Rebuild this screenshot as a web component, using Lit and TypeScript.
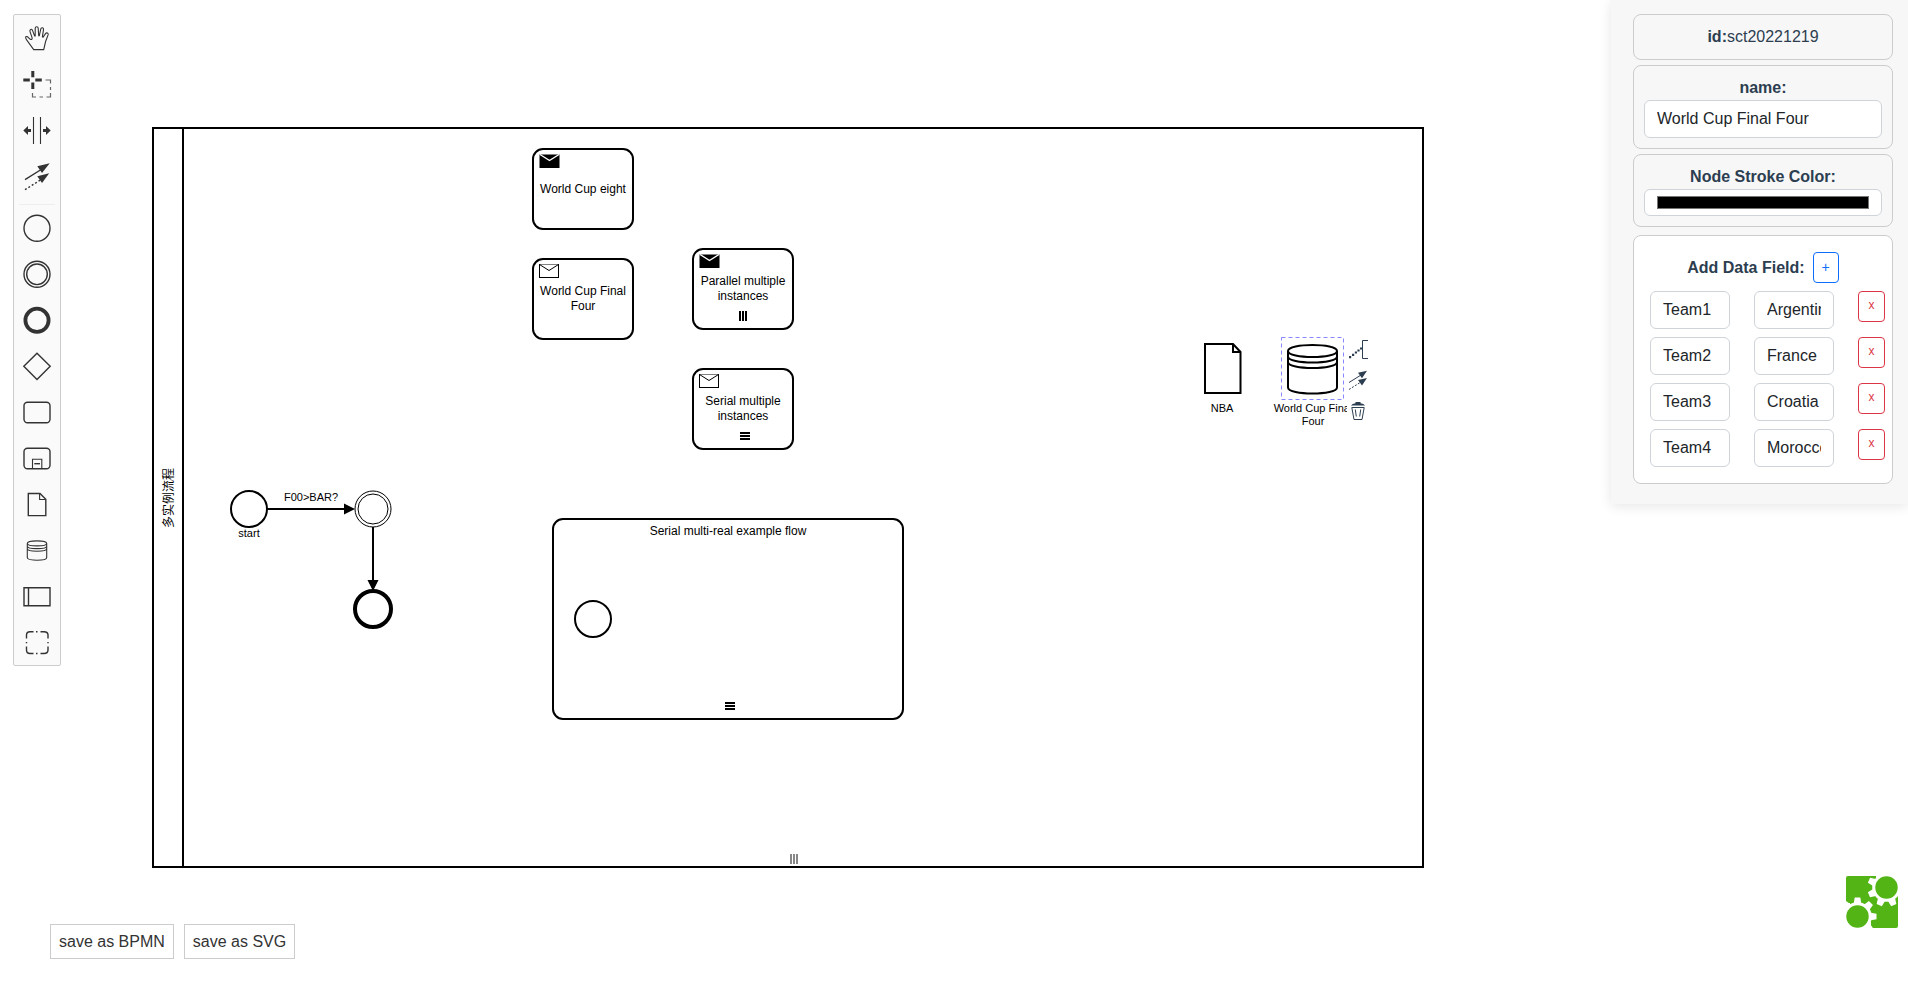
import { LitElement, html, svg, css, type SVGTemplateResult } from "lit";
import { customElement, property, state } from "lit/decorators.js";

interface Field {
  key: string;
  value: string;
}

interface Tool {
  title: string;
  icon: SVGTemplateResult;
}

const flowTools: Tool[] = [
  {
    title: "Activate the hand tool",
    icon: svg`<path class="thin" d="M11.7 26.6 L4.8 17.2 C2.8 14.6 3.6 13 5 13.6 C6.4 14.2 7.4 16 8.7 16.5 C10 16.8 10.4 15.6 10 14.3 L8 8.6 C7.4 6.3 9.6 5.4 10.5 7.4 L12.6 12.9 H13.2 V5.3 C13.3 3.3 16.1 3.3 16.2 5.3 L16.7 12.8 H17.3 L18.8 6 C19.3 4 21.8 4.6 21.5 6.6 L20.4 13.8 L21 14.2 L23.5 10.6 C24.6 9.2 26.7 10 26.1 11.9 L23.6 18.5 L21.7 26.6 Z"/>`,
  },
  {
    title: "Activate the lasso tool",
    icon: svg`<path class="fill" d="M9.3 2h3v6.3H9.3z M9.3 13.5h3V20H9.3z M1.3 9.5h6.5v3H1.3z M13.3 9.5h6.5v3h-6.5z"/>
      <path class="dim" d="M23.5 11H28.5V14.5 M28.5 18V21 M28.5 24V28H24.5 M21 28H17.5 M14 28H10.5V24"/>`,
  },
  {
    title: "Activate the create/remove space tool",
    icon: svg`<path class="thin" d="M11.5 2V29 M18.5 2V29"/>
      <path class="fill" d="M1.3 15.5 L6 11 V14 H9 V17 H6 V20 Z M28.7 15.5 L24 11 V14 H21 V17 H24 V20 Z"/>`,
  },
  {
    title: "Activate the global connect tool",
    icon: svg`<path class="line" d="M3 18.7 L20 8"/><path class="fill" d="M27.7 2.3 L15.3 5.2 L20 12 Z"/>
      <path class="line" stroke-dasharray="2 2" d="M3 28.7 L20 18"/><path class="fill" d="M27.2 12.3 L15.3 15.2 L20 22 Z"/>`,
  },
];

const shapeTools: Tool[] = [
  { title: "Create StartEvent", icon: svg`<circle class="line" cx="15" cy="15.3" r="13"/>` },
  {
    title: "Create Intermediate/Boundary Event",
    icon: svg`<circle class="line" cx="15" cy="15.3" r="13"/><circle class="line" cx="15" cy="15.3" r="10.3"/>`,
  },
  { title: "Create EndEvent", icon: svg`<circle class="heavy" cx="15" cy="15.3" r="11.6"/>` },
  { title: "Create Gateway", icon: svg`<path class="line" d="M15 2.2 L28.2 15.3 L15 28.4 L1.8 15.3 Z"/>` },
  { title: "Create Task", icon: svg`<rect class="line" x="2" y="5.2" width="26" height="20.5" rx="3.5"/>` },
  {
    title: "Create expanded SubProcess",
    icon: svg`<rect class="line" x="2" y="5.2" width="26" height="20.5" rx="3.5"/>
      <path class="thin" d="M10.5 25.5V16.3H19.8V25.5"/><path class="line" d="M12.3 20.7H18"/>`,
  },
  {
    title: "Create DataObjectReference",
    icon: svg`<path class="line" d="M6.3 4.5H18L23.8 10.3V26.6H6.3Z"/><path class="thin" d="M17.6 4.5V10.5H23.8"/>`,
  },
  {
    title: "Create DataStoreReference",
    icon: svg`<path class="thin" d="M5.3 8.5C5.3 5 24.7 5 24.7 8.5V22.5C24.7 26.2 5.3 26.2 5.3 22.5Z M5.3 8.5C5.3 11.7 24.7 11.7 24.7 8.5 M5.3 11.2C5.3 14.4 24.7 14.4 24.7 11.2 M5.3 13.8C5.3 17 24.7 17 24.7 13.8"/>`,
  },
  {
    title: "Create Pool/Participant",
    icon: svg`<path class="line" d="M2 6.8H28V24.8H2Z M6.5 6.8V24.8"/>`,
  },
  {
    title: "Create Group",
    icon: svg`<path class="line" d="M4.5 11.5V8Q4.5 4.7 8 4.7H11.5 M14 4.7H15.5 M18.5 4.7H22Q26 4.7 26 8V11.5 M26 15V16.2 M26 19.5V23Q26 26.5 22 26.5H18.5 M15.5 26.5H14 M11.5 26.5H8Q4.5 26.5 4.5 23V19.5 M4.5 16.2V15"/>`,
  },
];

@customElement("tool-palette")
export class ToolPalette extends LitElement {
  static styles = css`
    :host {
      display: block;
      box-sizing: border-box;
      width: 48px;
      background: #fafafa;
      border: 1px solid #ccc;
      border-radius: 2px;
    }
    .entry {
      display: grid;
      place-items: center;
      width: 100%;
      height: 46px;
      padding: 0;
      border: 0;
      background: none;
      cursor: pointer;
    }
    .entry svg {
      width: 30px;
      height: 30px;
    }
    .separator {
      margin: 0 5px;
      padding-top: 5px;
      border: 0;
      border-bottom: 1px solid #eee;
    }
    .line,
    .thin,
    .dim,
    .heavy {
      fill: none;
      stroke: #333;
      stroke-width: 1.4;
    }
    .thin {
      stroke-width: 1.1;
    }
    .dim {
      stroke: #666;
      stroke-width: 1.2;
    }
    .heavy {
      stroke-width: 3.8;
    }
    .fill {
      fill: #333;
    }
  `;

  private entry(tool: Tool) {
    return html`<button class="entry" type="button" title=${tool.title} aria-label=${tool.title}>
      <svg viewBox="0 0 30 30" aria-hidden="true">${tool.icon}</svg>
    </button>`;
  }

  render() {
    return html`${flowTools.map((t) => this.entry(t))}
      <hr class="separator" />
      ${shapeTools.map((t) => this.entry(t))}`;
  }
}

@customElement("process-canvas")
export class ProcessCanvas extends LitElement {
  static styles = css`
    :host {
      display: block;
      position: relative;
      overflow: hidden;
      background: #fff;
    }
    .diagram {
      display: block;
      width: 100%;
      height: 100%;
    }
    .shape {
      fill: #fff;
      stroke: #000;
      stroke-width: 2;
    }
    .inner {
      fill: none;
      stroke: #000;
      stroke-width: 2;
    }
    .double {
      fill: #fff;
      stroke: #000;
      stroke-width: 1;
    }
    .end {
      fill: #fff;
      stroke: #000;
      stroke-width: 4;
    }
    .selection {
      fill: none;
      stroke: #88f;
      stroke-dasharray: 4 3;
    }
    .soft {
      fill: #888;
    }
    .flap {
      fill: none;
      stroke: #fff;
      stroke-width: 1.4;
    }
    text {
      font-family: "Liberation Sans", Arial, "Noto Sans CJK SC", sans-serif;
      font-size: 12px;
      text-anchor: middle;
      fill: #000;
    }
    .outer-label {
      font-size: 11px;
    }
    .pad {
      position: absolute;
      left: 1347px;
      top: 336px;
      display: flex;
      flex-direction: column;
      gap: 7px;
    }
    .pad-entry {
      display: block;
      width: 24px;
      height: 24px;
      padding: 0;
      border: 0;
      background: #fff;
      cursor: pointer;
    }
    .pad-entry svg {
      display: block;
      width: 24px;
      height: 24px;
    }
    .stroke {
      fill: none;
      stroke: #2c3e50;
      stroke-width: 1;
    }
    .solid {
      fill: #2c3e50;
    }
  `;

  private task(x: number, y: number, lines: string[], filled: boolean, baseline: number) {
    return svg`<g transform="translate(${x} ${y})">
      <rect class="shape" width="100" height="80" rx="10"/>
      ${
        filled
          ? svg`<rect x="6.5" y="5.5" width="20" height="13.5"/><path class="flap" d="M7 5.5 L16.5 11.5 L26 5.5"/>`
          : svg`<rect class="double" x="6.5" y="5.5" width="19" height="13"/><path class="double" d="M6.5 5.5 L16 11.5 L25.5 5.5"/>`
      }
      ${lines.map((line, i) => svg`<text x="50" y=${baseline + i * 15}>${line}</text>`)}
    </g>`;
  }

  render() {
    return html`
      <svg class="diagram" role="img" aria-label="BPMN diagram">
        <rect class="shape" x="153" y="128" width="1270" height="739" />
        <path class="inner" d="M183 128V867" />
        <text transform="translate(173 498) rotate(-90)">多实例流程</text>
        <path class="soft" d="M790 854h2v10h-2z M793 854h2v10h-2z M796 854h2v10h-2z" />

        ${this.task(533, 149, ["World Cup eight"], true, 44)}
        ${this.task(533, 259, ["World Cup Final", "Four"], false, 36)}
        ${this.task(693, 249, ["Parallel multiple", "instances"], true, 36)}
        <path d="M739 311h2v10h-2z M742 311h2v10h-2z M745 311h2v10h-2z" />
        ${this.task(693, 369, ["Serial multiple", "instances"], false, 36)}
        <path d="M740 432h10v2h-10z M740 435h10v2h-10z M740 438h10v2h-10z" />

        <rect class="shape" x="553" y="519" width="350" height="200" rx="10" />
        <text x="728" y="535">Serial multi-real example flow</text>
        <circle class="shape" cx="593" cy="619" r="18" />
        <path d="M725 702h10v2h-10z M725 705h10v2h-10z M725 708h10v2h-10z" />

        <circle class="shape" cx="249" cy="509" r="18" />
        <text class="outer-label" x="249" y="537">start</text>
        <path class="inner" d="M267 509H346 M373 527V582" />
        <path d="M355 509 L344 503.5 V514.5 Z M373 591 L367.5 580 H378.5 Z" />
        <text class="outer-label" x="311" y="501">F00&gt;BAR?</text>
        <circle class="double" cx="373" cy="509" r="18" />
        <circle class="double" cx="373" cy="509" r="15" />
        <circle class="end" cx="373" cy="609" r="18" />

        <path class="shape" d="M1205 344H1233L1240.5 352V393H1205Z" />
        <path class="inner" d="M1233 344V352H1240.5" />
        <text class="outer-label" x="1222" y="412">NBA</text>

        <path
          class="shape"
          d="M1288 351C1288 343 1337 343 1337 351V387.5C1337 395.5 1288 395.5 1288 387.5Z"
        />
        <path
          class="inner"
          d="M1288 351C1288 359 1337 359 1337 351 M1288 356.5C1288 364.5 1337 364.5 1337 356.5 M1288 362C1288 370 1337 370 1337 362"
        />
        <text class="outer-label" x="1313" y="412">World Cup Final</text>
        <text class="outer-label" x="1313" y="425">Four</text>
        <rect class="selection" x="1281.5" y="337.5" width="62" height="62" />
      </svg>

      <div class="pad">
        <button class="pad-entry" type="button" aria-label="Append TextAnnotation">
          <svg viewBox="0 0 24 24" aria-hidden="true">
            <path class="stroke" d="M21 4.5H15.5V22.5H21" />
            <path
              class="solid"
              d="M2 20h2.2v2.2H2z M5 17.7h2.2v2.2H5z M7.8 15.4h2.2v2.2H7.8z M10.4 13.4h2.2v2.2h-2.2z M13 11.4h2.2v2.2H13z"
            />
          </svg>
        </button>
        <button class="pad-entry" type="button" aria-label="Connect using Association">
          <svg viewBox="0 0 24 24" aria-hidden="true">
            <path class="stroke" d="M2 15.5L14 8" />
            <path class="solid" d="M20 3.8L11 5.8L15 11.2Z" />
            <path class="stroke" stroke-dasharray="2 1.5" d="M2 22.5L14 15" />
            <path class="solid" d="M20 11L11 13L15 18.4Z" />
          </svg>
        </button>
        <button class="pad-entry" type="button" aria-label="Remove">
          <svg viewBox="0 0 24 24" aria-hidden="true">
            <path class="solid" d="M4 7.5Q5 5.5 8.5 5.2V4H13.5V5.2Q17 5.5 18 7.5Z" />
            <path class="stroke" d="M4.8 9.5H17.2L15 21.5H7L4.8 9.5Z M8.3 11.5L9.3 18.5 M13.7 11.5L12.7 18.5" />
          </svg>
        </button>
      </div>
    `;
  }
}

@customElement("properties-panel")
export class PropertiesPanel extends LitElement {
  @property({ attribute: "node-id" }) nodeId = "";
  @property() name = "";
  @state() private fields: Field[] = [
    { key: "Team1", value: "Argentina" },
    { key: "Team2", value: "France" },
    { key: "Team3", value: "Croatia" },
    { key: "Team4", value: "Morocco" },
  ];

  static styles = css`
    :host {
      display: flex;
      flex-direction: column;
      gap: 5px;
      box-sizing: border-box;
      width: 297px;
      padding: 14px 15px 20px 22px;
      background: #f7f7f7;
      box-shadow: 0 2px 12px rgba(0, 0, 0, 0.1);
      color: #2c3e50;
      font-family: "Liberation Sans", Arial, sans-serif;
      font-size: 16px;
      line-height: 24px;
      text-align: center;
    }
    .card {
      padding: 10px;
      border: 1px solid #ccc;
      border-radius: 8px;
    }
    .label {
      display: block;
      font-weight: bold;
    }
    .inline {
      display: inline;
      font-weight: bold;
    }
    .input {
      display: block;
      box-sizing: border-box;
      width: 100%;
      height: 38px;
      padding: 6px 12px;
      border: 1px solid #ced4da;
      border-radius: 6px;
      background: #fff;
      color: #212529;
      font: inherit;
    }
    .color {
      height: 27px;
    }
    .color::-webkit-color-swatch-wrapper {
      padding: 0;
    }
    .color::-webkit-color-swatch {
      border: 1px solid #767676;
      border-radius: 0;
    }
    .data {
      display: flex;
      flex-direction: column;
      gap: 8px;
      margin-top: 3px;
      padding: 16px 7px;
      background: #fff;
    }
    .heading {
      display: flex;
      align-items: center;
      justify-content: center;
      gap: 8px;
      font-weight: bold;
    }
    .row {
      display: grid;
      grid-template-columns: 80px 80px 27px;
      justify-content: space-between;
      align-items: start;
      padding-left: 9px;
    }
    .button {
      box-sizing: border-box;
      min-width: 26px;
      height: 31px;
      padding: 4px 8px;
      border: 1px solid #0d6efd;
      border-radius: 4px;
      background: #fff;
      color: #0d6efd;
      font-family: inherit;
      font-size: 14px;
      line-height: 21px;
      cursor: pointer;
    }
    .remove {
      border-color: #dc3545;
      color: #dc3545;
      font-size: 12px;
      line-height: 20px;
      padding: 3px 8px 6px;
    }
  `;

  private add() {
    this.fields = [...this.fields, { key: "", value: "" }];
  }

  private remove(index: number) {
    this.fields = this.fields.filter((_, i) => i !== index);
  }

  render() {
    return html`
      <div class="card"><span class="inline">id:</span>${this.nodeId}</div>
      <div class="card">
        <label class="label" for="name">name:</label>
        <input class="input" id="name" type="text" .value=${this.name} />
      </div>
      <div class="card">
        <label class="label" for="stroke">Node Stroke Color:</label>
        <input class="input color" id="stroke" type="color" value="#000000" />
      </div>
      <div class="card data">
        <div class="heading">
          <span>Add Data Field:</span>
          <button class="button" type="button" aria-label="Add field" @click=${this.add}>+</button>
        </div>
        ${this.fields.map(
          (f, i) => html`<div class="row">
            <input class="input" type="text" aria-label="Field name" .value=${f.key} />
            <input class="input" type="text" aria-label="Field value" .value=${f.value} />
            <button class="button remove" type="button" aria-label="Remove field" @click=${() => this.remove(i)}>x</button>
          </div>`,
        )}
      </div>
    `;
  }
}

@customElement("app-root")
export class AppRoot extends LitElement {
  static styles = css`
    :host {
      display: grid;
      grid-template-columns: auto 1fr auto;
      grid-template-rows: 1fr auto;
      min-height: 100vh;
      background: #fff;
      font-family: "Liberation Sans", Arial, sans-serif;
    }
    .canvas {
      grid-area: 1 / 1 / -1 / -1;
    }
    .palette {
      grid-area: 1 / 1;
      align-self: start;
      margin: 14px 0 0 13px;
      z-index: 1;
    }
    .panel {
      grid-area: 1 / 3;
      align-self: start;
      z-index: 1;
    }
    .footer {
      grid-area: 2 / 1 / 3 / -1;
      display: flex;
      align-items: flex-end;
      justify-content: space-between;
      padding: 0 10px 35px 50px;
      z-index: 1;
    }
    .actions {
      display: flex;
      gap: 10px;
    }
    .save {
      padding: 7px 8px;
      border: 1px solid #ccc;
      background: #fff;
      color: #333;
      font-family: inherit;
      font-size: 16px;
      line-height: 19px;
      cursor: pointer;
    }
    .logo {
      display: block;
      margin-bottom: 31px;
    }
    .logo svg {
      display: block;
      width: 52px;
      height: 52px;
    }
    .green {
      fill: #52b415;
    }
    .gap {
      fill: #fff;
    }
  `;

  private gear(cx: number, cy: number, start: number) {
    const teeth = [0, 1, 2, 3, 4, 5, 6, 7].map((i) => start + i * 45);
    return svg`<g transform="translate(${cx} ${cy})">
      <circle class="gap" r="14.3"/>
      ${teeth.map((a) => svg`<path class="gap" transform="rotate(${a})" d="M12 -4L19 -2.8V2.8L12 4Z"/>`)}
      <circle class="green" r="11.2"/>
    </g>`;
  }

  render() {
    return html`
      <process-canvas class="canvas"></process-canvas>
      <tool-palette class="palette"></tool-palette>
      <properties-panel class="panel" node-id="sct20221219" name="World Cup Final Four"></properties-panel>
      <div class="footer">
        <div class="actions">
          <button class="save" type="button">save as BPMN</button>
          <button class="save" type="button">save as SVG</button>
        </div>
        <a class="logo" href="http://bpmn.io" aria-label="Powered by bpmn.io">
          <svg viewBox="0 0 52 52" aria-hidden="true">
            <rect class="green" width="52" height="52" rx="2" />
            <path class="gap" d="M30 0H52V8H30Z M0 27H4V52H25V46H0Z" />
            ${this.gear(40.5, 11.5, 22.5)} ${this.gear(11.5, 40.5, 0)}
          </svg>
        </a>
      </div>
    `;
  }
}
